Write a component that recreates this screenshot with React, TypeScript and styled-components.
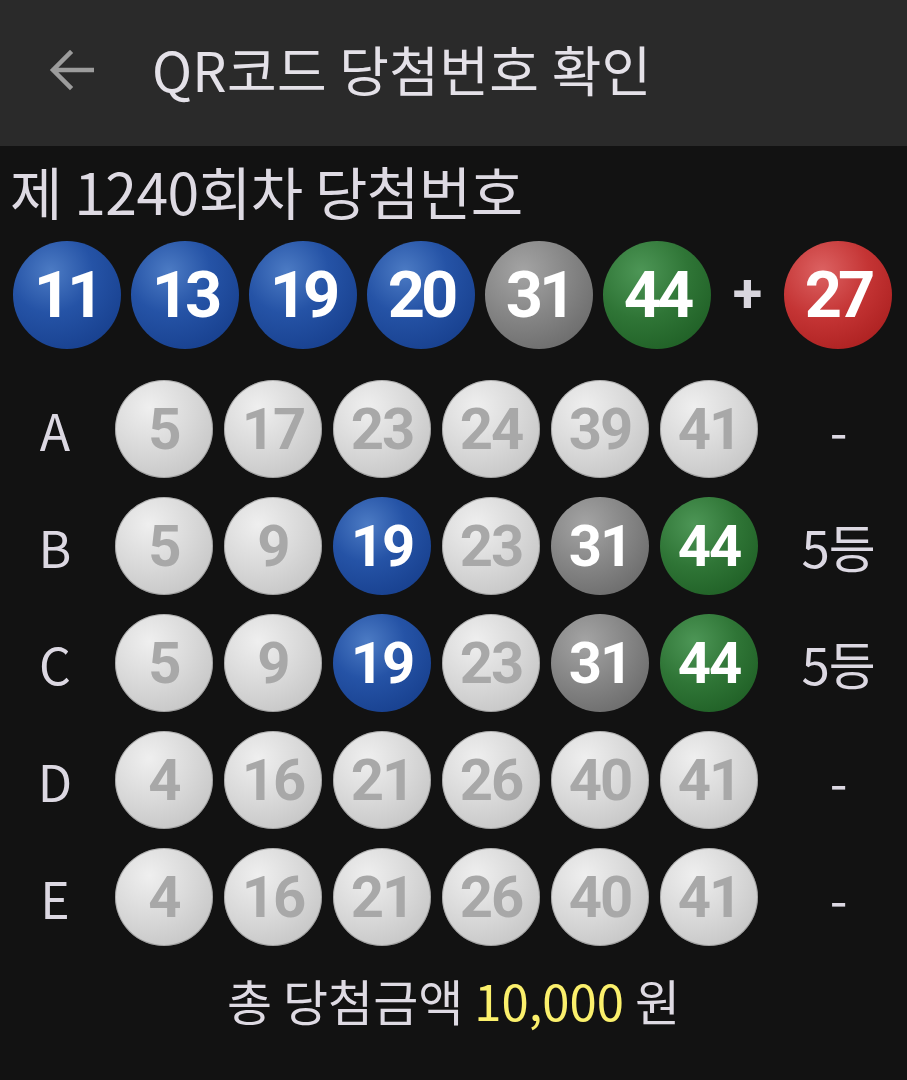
import React from "react";
import styled, { createGlobalStyle } from "styled-components";

const GlobalStyle = createGlobalStyle`
  html, body {
    margin: 0;
    padding: 0;
    background: #121212;
  }
  body {
    font-family: "Noto Sans CJK KR", "Noto Sans", sans-serif;
    color: #dedae3;
  }
`;

type BallColor = "blue" | "gray" | "green" | "red" | "light";

const ballFills: Record<BallColor, string> = {
  blue: "radial-gradient(circle at 35% 28%, #4c7bc4 0%, #2553a6 40%, #173f8d 85%, #12367d 100%)",
  gray: "radial-gradient(circle at 35% 28%, #a4a4a4 0%, #858585 45%, #676767 90%, #5d5d5d 100%)",
  green: "radial-gradient(circle at 35% 28%, #4d9656 0%, #2f7536 45%, #1d5c23 90%, #18521e 100%)",
  red: "radial-gradient(circle at 35% 28%, #dc6262 0%, #c43434 45%, #a81d1d 90%, #9c1818 100%)",
  light: "radial-gradient(circle at 35% 28%, #efefef 0%, #d9d9d9 45%, #c3c3c3 88%, #b3b3b3 100%)",
};

const Page = styled.div`
  width: 907px;
  min-height: 1080px;
  background: #121212;
`;

const Header = styled.header`
  height: 146px;
  background: #2a2a2a;
  display: flex;
  align-items: center;
  padding-left: 48px;
  box-sizing: border-box;
`;

const BackIcon = styled.svg`
  width: 46px;
  height: 42px;
  flex-shrink: 0;
  margin-top: -6px;
`;

const HeaderTitle = styled.h1`
  margin: -10px 0 0 58px;
  font-size: 54px;
  font-weight: 400;
  color: #e4e1e8;
  letter-spacing: 0.3px;
`;

const RoundTitle = styled.h2`
  margin: 0;
  padding: 6px 0 0 10px;
  font-size: 57px;
  font-weight: 400;
  line-height: 76px;
  color: #dedae3;
  letter-spacing: -0.5px;
`;

const WinRow = styled.div`
  display: flex;
  align-items: center;
  gap: 10px;
  padding: 13px 0 0 13px;
`;

const Ball = styled.div<{ $color: BallColor; $size: number }>`
  width: ${(p) => p.$size}px;
  height: ${(p) => p.$size}px;
  border-radius: 50%;
  flex-shrink: 0;
  display: flex;
  align-items: center;
  justify-content: center;
  background: ${(p) => ballFills[p.$color]};
  box-shadow: ${(p) =>
    p.$color === "light" ? "inset 0 0 0 1px rgba(90,90,90,0.35)" : "none"};
  color: ${(p) => (p.$color === "light" ? "#a8a8a8" : "#ffffff")};
  font-family: Roboto, "Liberation Sans", sans-serif;
  font-weight: 700;
  font-size: ${(p) => (p.$size > 100 ? 65 : 58)}px;
  letter-spacing: ${(p) => (p.$size > 100 ? -4 : -2)}px;
  line-height: 1;
`;

const Plus = styled.span`
  width: 53px;
  text-align: center;
  font-family: Roboto, "Liberation Sans", sans-serif;
  font-size: 54px;
  font-weight: 700;
  color: #d9d6de;
  margin-top: -4px;
`;

const Games = styled.div`
  display: grid;
  grid-template-columns: 104px repeat(6, 98px) 1fr;
  column-gap: 11px;
  row-gap: 19px;
  margin-top: 31px;
  align-items: center;
`;

const RowLabel = styled.span`
  text-align: center;
  padding-left: 6px;
  font-size: 50px;
  font-weight: 400;
  color: #dcd8e2;
`;

const Result = styled.span`
  text-align: center;
  font-size: 51px;
  color: #dcd8e2;
  letter-spacing: -1px;
`;

const Total = styled.p`
  margin: 18px 0 0;
  text-align: center;
  font-size: 49px;
  color: #dedae3;
`;

const Amount = styled.span`
  color: #fbf06c;
`;

const winning = [11, 13, 19, 20, 31, 44];
const bonus = 27;

const colorFor = (n: number): BallColor => {
  if (n <= 10) return "gray";
  if (n <= 20) return "blue";
  if (n <= 30) return "red";
  if (n <= 40) return "gray";
  return "green";
};

const games = [
  { label: "A", nums: [5, 17, 23, 24, 39, 41], result: "-" },
  { label: "B", nums: [5, 9, 19, 23, 31, 44], result: "5등" },
  { label: "C", nums: [5, 9, 19, 23, 31, 44], result: "5등" },
  { label: "D", nums: [4, 16, 21, 26, 40, 41], result: "-" },
  { label: "E", nums: [4, 16, 21, 26, 40, 41], result: "-" },
];

export default function App() {
  return (
    <Page>
      <GlobalStyle />
      <Header>
        <BackIcon viewBox="0 0 46 42">
          <path
            d="M44 21H6M22 4L5 21l17 17"
            fill="none"
            stroke="#9c9c9c"
            strokeWidth="4.5"
            strokeLinecap="square"
          />
        </BackIcon>
        <HeaderTitle>QR코드 당첨번호 확인</HeaderTitle>
      </Header>

      <RoundTitle>제 1240회차 당첨번호</RoundTitle>

      <WinRow>
        {winning.map((n) => (
          <Ball key={n} $color={colorFor(n)} $size={108}>
            {n}
          </Ball>
        ))}
        <Plus>+</Plus>
        <Ball $color={colorFor(bonus)} $size={108}>
          {bonus}
        </Ball>
      </WinRow>

      <Games>
        {games.map((g) => (
          <React.Fragment key={g.label}>
            <RowLabel>{g.label}</RowLabel>
            {g.nums.map((n, i) => (
              <Ball
                key={i}
                $color={winning.includes(n) ? colorFor(n) : "light"}
                $size={98}
              >
                {n}
              </Ball>
            ))}
            <Result>{g.result}</Result>
          </React.Fragment>
        ))}
      </Games>

      <Total>
        총 당첨금액 <Amount>10,000</Amount> 원
      </Total>
    </Page>
  );
}
